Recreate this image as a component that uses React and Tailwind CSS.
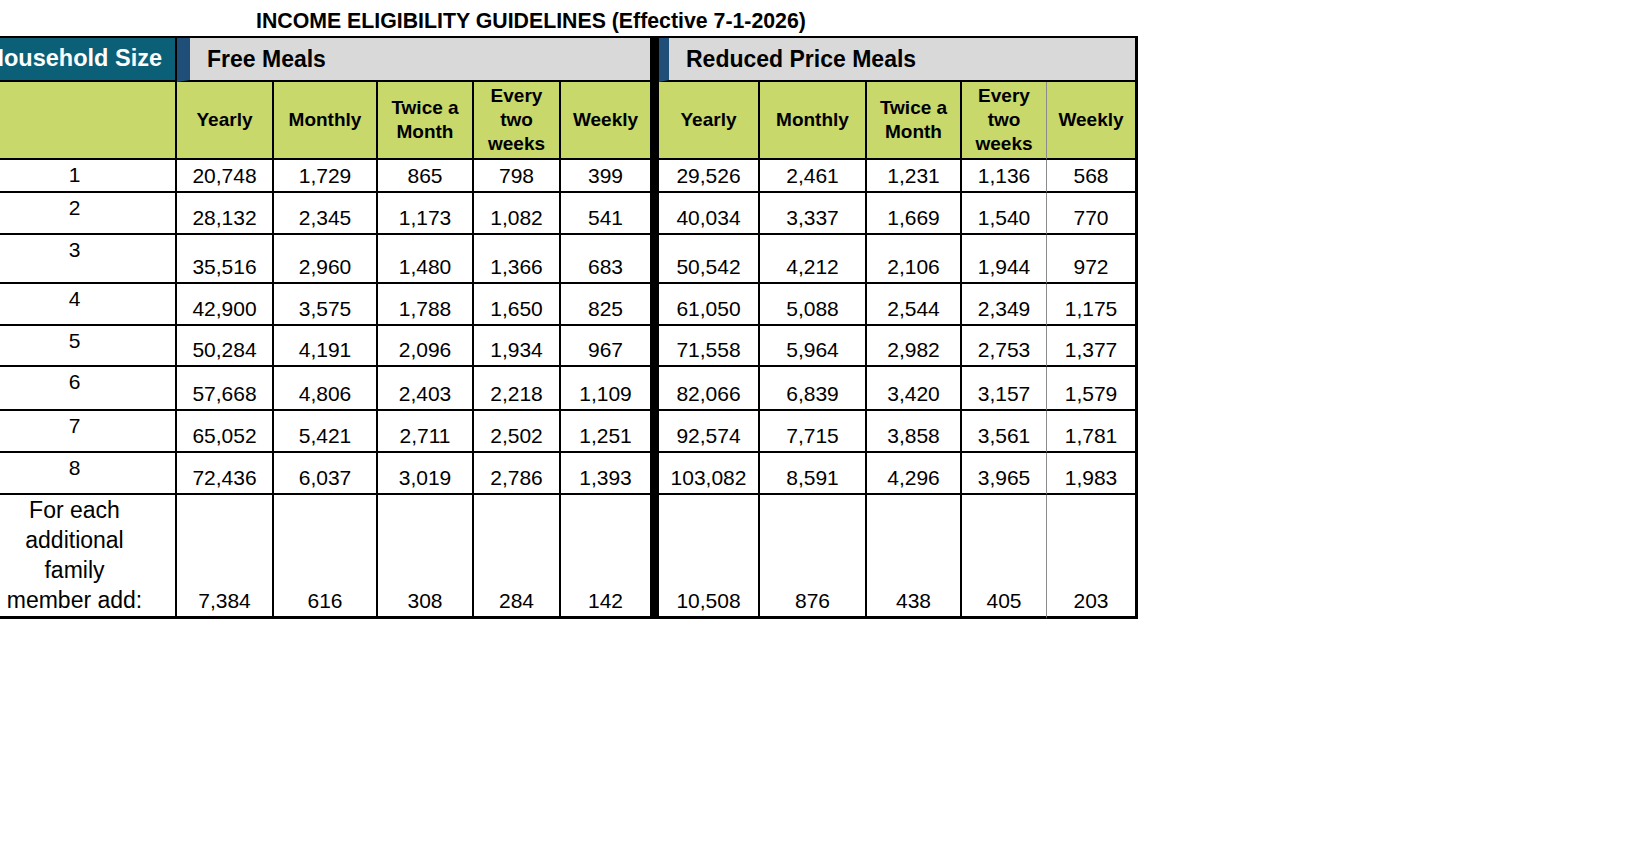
import React from 'react';

// Income eligibility table. Column widths and row heights are fixed so the
// sheet lines up like the printed guideline (the table is cropped on the left).

const FREE = [
  ['20,748', '1,729', '865', '798', '399'],
  ['28,132', '2,345', '1,173', '1,082', '541'],
  ['35,516', '2,960', '1,480', '1,366', '683'],
  ['42,900', '3,575', '1,788', '1,650', '825'],
  ['50,284', '4,191', '2,096', '1,934', '967'],
  ['57,668', '4,806', '2,403', '2,218', '1,109'],
  ['65,052', '5,421', '2,711', '2,502', '1,251'],
  ['72,436', '6,037', '3,019', '2,786', '1,393'],
];

const REDUCED = [
  ['29,526', '2,461', '1,231', '1,136', '568'],
  ['40,034', '3,337', '1,669', '1,540', '770'],
  ['50,542', '4,212', '2,106', '1,944', '972'],
  ['61,050', '5,088', '2,544', '2,349', '1,175'],
  ['71,558', '5,964', '2,982', '2,753', '1,377'],
  ['82,066', '6,839', '3,420', '3,157', '1,579'],
  ['92,574', '7,715', '3,858', '3,561', '1,781'],
  ['103,082', '8,591', '4,296', '3,965', '1,983'],
];

const EXTRA_FREE = ['7,384', '616', '308', '284', '142'];
const EXTRA_REDUCED = ['10,508', '876', '438', '405', '203'];

// right edge of each of the five columns in a section
const FREE_RB = [
  'border-r-2 border-r-black',
  'border-r-2 border-r-black',
  'border-r-2 border-r-black',
  'border-r-2 border-r-black',
  '',
];
const REDUCED_RB = [
  'border-r-2 border-r-black',
  'border-r-2 border-r-black',
  'border-r-2 border-r-black',
  'border-r border-r-[#8c8c8c]',
  'border-r-[3px] border-r-black',
];

const LABELS = [
  ['Yearly'],
  ['Monthly'],
  ['Twice a', 'Month'],
  ['Every', 'two', 'weeks'],
  ['Weekly'],
];

function Label({ lines, rb }) {
  return (
    <div
      className={`flex flex-col items-center justify-center bg-[#c8d86b] border-b-2 border-b-black text-[19px] font-bold leading-[24px] text-black ${rb}`}
    >
      {lines.map((l) => (
        <span key={l}>{l}</span>
      ))}
    </div>
  );
}

function Num({ value, rb, last }) {
  return (
    <div
      className={`flex items-end justify-center bg-white pb-[3px] text-[21px] leading-[24px] text-black ${
        last ? 'border-b-[3px]' : 'border-b-2'
      } border-b-black ${rb}`}
    >
      {value}
    </div>
  );
}

export default function App() {
  return (
    <div
      className="min-h-screen w-full overflow-hidden bg-white text-black"
      style={{ fontFamily: '"Liberation Sans", Arial, sans-serif' }}
    >
      <div className="h-[36px] pl-[256px] pt-[9px] text-[21.3px] font-bold leading-[24px]">
        INCOME ELIGIBILITY GUIDELINES (Effective 7-1-2026)
      </div>

      <div className="-ml-[26px] grid w-fit grid-cols-[203px_97px_104px_96px_87px_89px_9px_101px_107px_95px_85px_91px] grid-rows-[44px_78px_33px_42px_49px_42px_41px_44px_42px_42px_124px] border-t-2 border-t-black">
        {/* thick divider between the two sections */}
        <div className="col-start-7 row-start-1 row-span-11 bg-black" />

        {/* header row 1 */}
        <div className="flex items-center justify-center bg-[#0b5f77] border-r-2 border-b-2 border-black text-[23.5px] font-bold text-white">
          Household Size
        </div>
        <div className="col-span-5 flex items-center border-l-[13px] border-l-[#1f4e79] border-b-2 border-b-black bg-[#d9d9d9] pl-[17px] text-[23px] font-bold">
          Free Meals
        </div>
        <div className="col-span-5 flex items-center border-l-[10px] border-l-[#1f4e79] border-b-2 border-b-black border-r-[3px] border-r-black bg-[#d9d9d9] pl-[17px] text-[23px] font-bold">
          Reduced Price Meals
        </div>

        {/* header row 2 */}
        <div className="bg-[#c8d86b] border-r-2 border-b-2 border-black" />
        {LABELS.map((lines, i) => (
          <Label key={'f' + i} lines={lines} rb={FREE_RB[i]} />
        ))}
        {LABELS.map((lines, i) => (
          <Label key={'r' + i} lines={lines} rb={REDUCED_RB[i]} />
        ))}

        {/* household rows */}
        {FREE.map((row, r) => (
          <React.Fragment key={r}>
            <div className="flex justify-center bg-white pt-[3px] text-[21px] leading-[24px] border-r-2 border-b-2 border-black">
              {r + 1}
            </div>
            {row.map((v, i) => (
              <Num key={'f' + i} value={v} rb={FREE_RB[i]} />
            ))}
            {REDUCED[r].map((v, i) => (
              <Num key={'r' + i} value={v} rb={REDUCED_RB[i]} />
            ))}
          </React.Fragment>
        ))}

        {/* each additional member */}
        <div className="flex flex-col items-center bg-white text-[23px] leading-[30px] border-r-2 border-b-[3px] border-black">
          <span>For each</span>
          <span>additional</span>
          <span>family</span>
          <span>member add:</span>
        </div>
        {EXTRA_FREE.map((v, i) => (
          <Num key={'xf' + i} value={v} rb={FREE_RB[i]} last />
        ))}
        {EXTRA_REDUCED.map((v, i) => (
          <Num key={'xr' + i} value={v} rb={REDUCED_RB[i]} last />
        ))}
      </div>
    </div>
  );
}
